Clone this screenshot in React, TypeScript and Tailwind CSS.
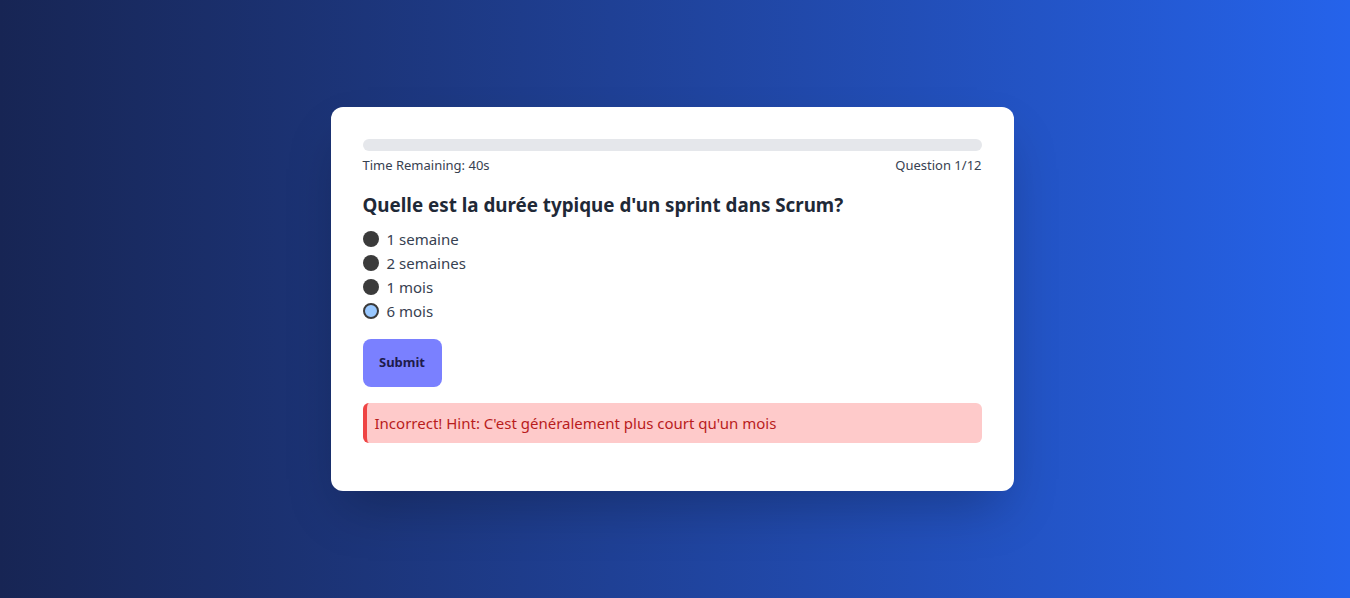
import { useState } from "react";

const OPTIONS = ["1 semaine", "2 semaines", "1 mois", "6 mois"];

export default function App() {
    const [selected, setSelected] = useState(3);

    return (
        <div
            className="flex min-h-screen items-center justify-center bg-gradient-to-r from-[#172554] to-[#2563eb]"
            style={{ fontFamily: '"Noto Sans", "Open Sans", sans-serif' }}
        >
            <div className="mr-[6px] w-[683px] rounded-xl bg-white px-8 pt-8 pb-12 shadow-2xl">
                <div className="h-3 w-full rounded-full bg-[#e5e7eb]" />
                <div className="mt-[4px] flex justify-between text-[13px] leading-5 text-[#374151]">
                    <span>Time Remaining: 40s</span>
                    <span>Question 1/12</span>
                </div>

                <h2 className="mt-[16px] text-[18.8px] leading-7 font-bold text-[#1f2937]">
                    Quelle est la durée typique d'un sprint dans Scrum?
                </h2>

                <div className="mt-[8px] flex flex-col">
                    {OPTIONS.map((opt, i) => (
                        <label
                            key={opt}
                            className="flex h-6 cursor-pointer items-center gap-2 text-[15px] text-[#374151]"
                            onClick={() => setSelected(i)}
                        >
                            {selected === i ? (
                                <span className="size-4 rounded-full border-2 border-[#3b3b3b] bg-[#99c8ff]" />
                            ) : (
                                <span className="size-4 rounded-full bg-[#3b3b3b]" />
                            )}
                            <span>{opt}</span>
                        </label>
                    ))}
                </div>

                <button className="mt-4 h-12 w-[79px] rounded-lg bg-[#7a80ff] text-[13px] font-bold text-[#1e1b4b]">
                    Submit
                </button>

                <div className="mt-4 flex h-10 items-center rounded-md border-l-4 border-[#ef4444] bg-[#fecaca] pl-2 text-[15px] text-[#b91c1c]">
                    Incorrect! Hint: C'est généralement plus court qu'un mois
                </div>
            </div>
        </div>
    );
}
